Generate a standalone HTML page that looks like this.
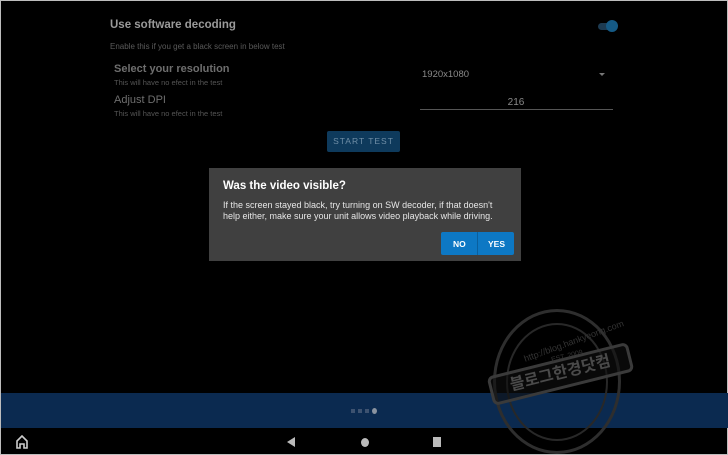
<!DOCTYPE html>
<html><head><meta charset="utf-8"><style>
*{margin:0;padding:0;box-sizing:border-box}
body{width:728px;height:455px;background:#000;position:relative;overflow:hidden;font-family:"Liberation Sans","Noto Sans CJK KR",sans-serif;border:1px solid #bdbdbd}
.a{position:absolute;white-space:nowrap}
</style></head><body>
<div class="a" style="left:109px;top:18px;font-size:11.5px;color:#9a9a9a;font-weight:bold">Use software decoding</div>
<div class="a" style="left:597px;top:22px;width:16px;height:7px;border-radius:4px;background:#1d3b52"></div>
<div class="a" style="left:605px;top:19px;width:12px;height:12px;border-radius:50%;background:#155a85"></div>
<div class="a" style="left:109px;top:41px;font-size:8px;color:#5a5a5a">Enable this if you get a black screen in below test</div>
<div class="a" style="left:113px;top:62px;font-size:11px;color:#6e6e6e;font-weight:bold">Select your resolution</div>
<div class="a" style="left:113px;top:77px;font-size:7.5px;color:#555">This will have no efect in the test</div>
<div class="a" style="left:421px;top:68px;font-size:9.5px;color:#8a8a8a">1920x1080</div>
<div class="a" style="left:598px;top:72px;width:0;height:0;border-left:3px solid transparent;border-right:3px solid transparent;border-top:3px solid #777"></div>
<div class="a" style="left:113px;top:93px;font-size:11px;color:#6e6e6e">Adjust DPI</div>
<div class="a" style="left:113px;top:108px;font-size:7.5px;color:#555">This will have no efect in the test</div>
<div class="a" style="left:500px;top:96px;width:30px;text-align:center;font-size:10px;color:#8a8a8a">216</div>
<div class="a" style="left:419px;top:108px;width:193px;height:1px;background:#555"></div>
<div class="a" style="left:326px;top:130px;width:73px;height:21px;background:#0e3a5c;border-radius:2px;color:#6f8ea6;font-size:8.5px;letter-spacing:1px;text-align:center;line-height:21px">START TEST</div>

<div class="a" style="left:208px;top:167px;width:312px;height:93px;background:#404040"></div>
<div class="a" style="left:222px;top:179px;font-size:11.5px;color:#fff;font-weight:bold">Was the video visible?</div>
<div class="a" style="left:222px;top:199px;font-size:9px;line-height:11px;color:#e6e6e6">If the screen stayed black, try turning on SW decoder, if that doesn't<br>help either, make sure your unit allows video playback while driving.</div>
<div class="a" style="left:440px;top:231px;width:73px;height:23px;background:#0d78c4;border-radius:2px"></div>
<div class="a" style="left:476px;top:231px;width:1px;height:23px;background:#0a5f9d"></div>
<div class="a" style="left:452px;top:238px;font-size:8.5px;color:#fff;font-weight:bold">NO</div>
<div class="a" style="left:487px;top:238px;font-size:8.5px;color:#fff;font-weight:bold">YES</div>

<div class="a" style="left:0;top:392px;width:728px;height:35px;background:#0b2a50"></div>
<div class="a" style="left:350px;top:408px;width:4px;height:4px;background:#3d5270"></div>
<div class="a" style="left:357px;top:408px;width:4px;height:4px;background:#3d5270"></div>
<div class="a" style="left:364px;top:408px;width:4px;height:4px;background:#3d5270"></div>
<div class="a" style="left:371px;top:407px;width:5px;height:6px;border-radius:50%;background:#8a93a0"></div>

<div class="a" style="left:492px;top:308px;width:128px;height:145px;border-radius:50%;border:3px solid #2e2e2e"></div>
<div class="a" style="left:505px;top:322px;width:102px;height:118px;border-radius:50%;border:2px solid #282828"></div>
<div class="a" style="left:487px;top:358px;width:145px;height:30px;border:3px solid #3a3a3a;border-radius:6px;transform:rotate(-14deg);background:rgba(15,15,15,.6);color:#4a4a4a;font-size:16px;font-weight:bold;text-align:center;line-height:24px">블로그한경닷컴</div>
<div class="a" style="left:520px;top:335px;font-size:9px;color:#333;transform:rotate(-20deg)">http://blog.hankyeong.com</div>
<div class="a" style="left:550px;top:352px;font-size:7px;color:#333;transform:rotate(-14deg)">EST. 2009</div>

<svg class="a" style="left:14px;top:434px" width="14" height="14" viewBox="0 0 14 14"><path d="M2 13V6L7 1L12 6V13H9V9H5V13Z" fill="none" stroke="#ccc" stroke-width="1.6"/></svg>
<div class="a" style="left:286px;top:436px;width:0;height:0;border-top:5px solid transparent;border-bottom:5px solid transparent;border-right:8px solid #bbb"></div>
<div class="a" style="left:360px;top:437px;width:8px;height:9px;border-radius:50%;background:#bbb"></div>
<div class="a" style="left:432px;top:436px;width:8px;height:10px;background:#bbb"></div>
</body></html>
